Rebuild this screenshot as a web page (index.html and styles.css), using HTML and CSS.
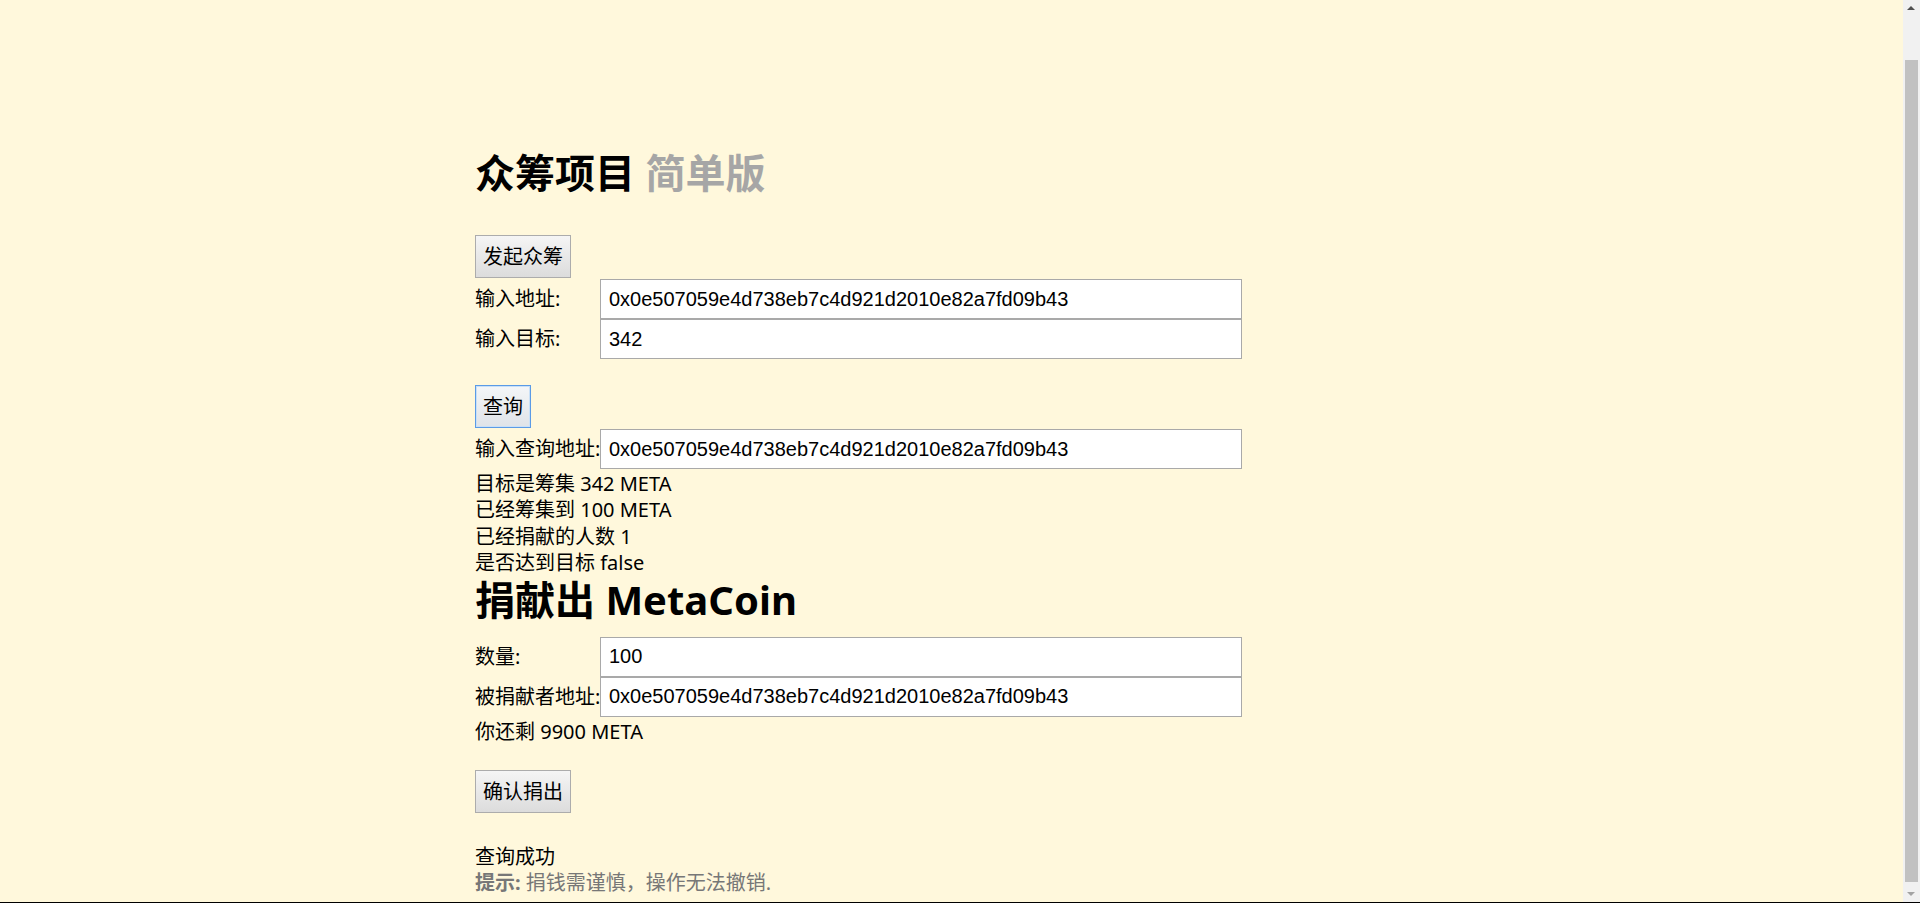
FILE: index.html
```html
<!DOCTYPE html>
<html lang="zh-CN">
<head>
<meta charset="utf-8">
<title>众筹项目 简单版</title>
<link rel="stylesheet" href="styles.css">
</head>
<body>
<div class="page">
  <div class="container">
    <h1 class="title">众筹项目 <span class="title-sub">简单版</span></h1>

    <button class="btn">发起众筹</button>
    <div class="field">
      <label class="field-label">输入地址:</label>
      <input class="field-input" type="text" value="0x0e507059e4d738eb7c4d921d2010e82a7fd09b43">
    </div>
    <div class="field">
      <label class="field-label">输入目标:</label>
      <input class="field-input" type="text" value="342">
    </div>

    <div class="spacer"></div>

    <button class="btn btn-focus">查询</button>
    <div class="field">
      <label class="field-label">输入查询地址:</label>
      <input class="field-input" type="text" value="0x0e507059e4d738eb7c4d921d2010e82a7fd09b43">
    </div>
    <div class="info">
      <div class="line">目标是筹集 342 META</div>
      <div class="line">已经筹集到 100 META</div>
      <div class="line">已经捐献的人数 1</div>
      <div class="line">是否达到目标 false</div>
    </div>

    <h2 class="section-title">捐献出 MetaCoin</h2>
    <div class="field">
      <label class="field-label">数量:</label>
      <input class="field-input" type="text" value="100">
    </div>
    <div class="field">
      <label class="field-label">被捐献者地址:</label>
      <input class="field-input" type="text" value="0x0e507059e4d738eb7c4d921d2010e82a7fd09b43">
    </div>
    <div class="line">你还剩 9900 META</div>

    <div class="spacer spacer-lg"></div>

    <button class="btn">确认捐出</button>

    <div class="spacer spacer-xl"></div>

    <div class="line">查询成功</div>
    <div class="line hint"><strong class="hint-strong">提示:</strong> 捐钱需谨慎，操作无法撤销.</div>
  </div>
</div>

<div class="scrollbar">
  <div class="sb-arrow sb-up"></div>
  <div class="sb-thumb"></div>
  <div class="sb-arrow sb-down"></div>
</div>
<div class="window-edge"></div>
</body>
</html>
```

FILE: styles.css
```css
html, body {
  margin: 0;
  padding: 0;
  background: #fff8dc;
}

body {
  font-family: "Noto Sans", "Noto Sans CJK SC", sans-serif;
  font-size: 20px;
  line-height: 26.4px;
  color: #000;
}

.page {
  margin-right: 17px;
  height: 903px;
  overflow: hidden;
}

.container {
  width: 953px;
  margin: 0 auto;
  padding-top: 151px;
}

.title {
  margin: 0 0 40px 0;
  font-size: 40px;
  line-height: 44px;
  font-weight: bold;
}

.title-sub {
  color: #a6a6a6;
}

.section-title {
  margin: 3px 0 15px 0;
  font-size: 40px;
  line-height: 44px;
  font-weight: bold;
}

.btn {
  display: block;
  height: 43px;
  margin: 0 0 1px 0;
  padding: 0 7px;
  font-family: "Noto Sans", "Noto Sans CJK SC", sans-serif;
  font-size: 20px;
  line-height: 27px;
  color: #000;
  background: linear-gradient(#f5f5f5, #dcdcdc);
  border: 1px solid #acacac;
  border-radius: 0;
}

.btn-focus {
  border-color: #5b9be6;
  box-shadow: inset 0 0 0 1px #c9e0f7;
  background: linear-gradient(#f4f6f8, #dfe3e8);
}

.field {
  display: flex;
  align-items: center;
  height: 40px;
}

.field-label {
  width: 125px;
  flex-shrink: 0;
  white-space: nowrap;
  padding-top: 1px;
}

.field-input {
  box-sizing: border-box;
  width: 642px;
  height: 40px;
  margin: 0;
  padding: 0 8px;
  font-family: "Liberation Sans", Arial, sans-serif;
  font-size: 20px;
  color: #000;
  background: #fff;
  border: 1px solid #a9a9a9;
  outline: none;
}

.spacer {
  height: 26px;
}

.spacer-lg {
  height: 27px;
}

.spacer-xl {
  height: 28px;
}

.info {
  margin: 0;
}

.line {
  box-sizing: border-box;
  height: 26.4px;
  padding-top: 2px;
  white-space: nowrap;
}

.hint {
  height: 27px;
  color: #777;
}

.hint-strong {
  font-weight: bold;
}

.scrollbar {
  position: fixed;
  top: 0;
  right: 0;
  width: 17px;
  height: 903px;
  background: #f1f1f1;
}

.sb-thumb {
  position: absolute;
  top: 60px;
  left: 2px;
  width: 13px;
  height: 822px;
  background: #c1c1c1;
}

.sb-arrow {
  position: absolute;
  left: 4px;
  width: 0;
  height: 0;
  border-left: 4px solid transparent;
  border-right: 4px solid transparent;
}

.sb-up {
  top: 6px;
  border-bottom: 4px solid #505050;
}

.sb-down {
  bottom: 7px;
  border-top: 4px solid #a3a3a3;
}

.window-edge {
  position: fixed;
  left: 0;
  right: 0;
  bottom: 0;
  height: 1px;
  background: #000;
}
```
